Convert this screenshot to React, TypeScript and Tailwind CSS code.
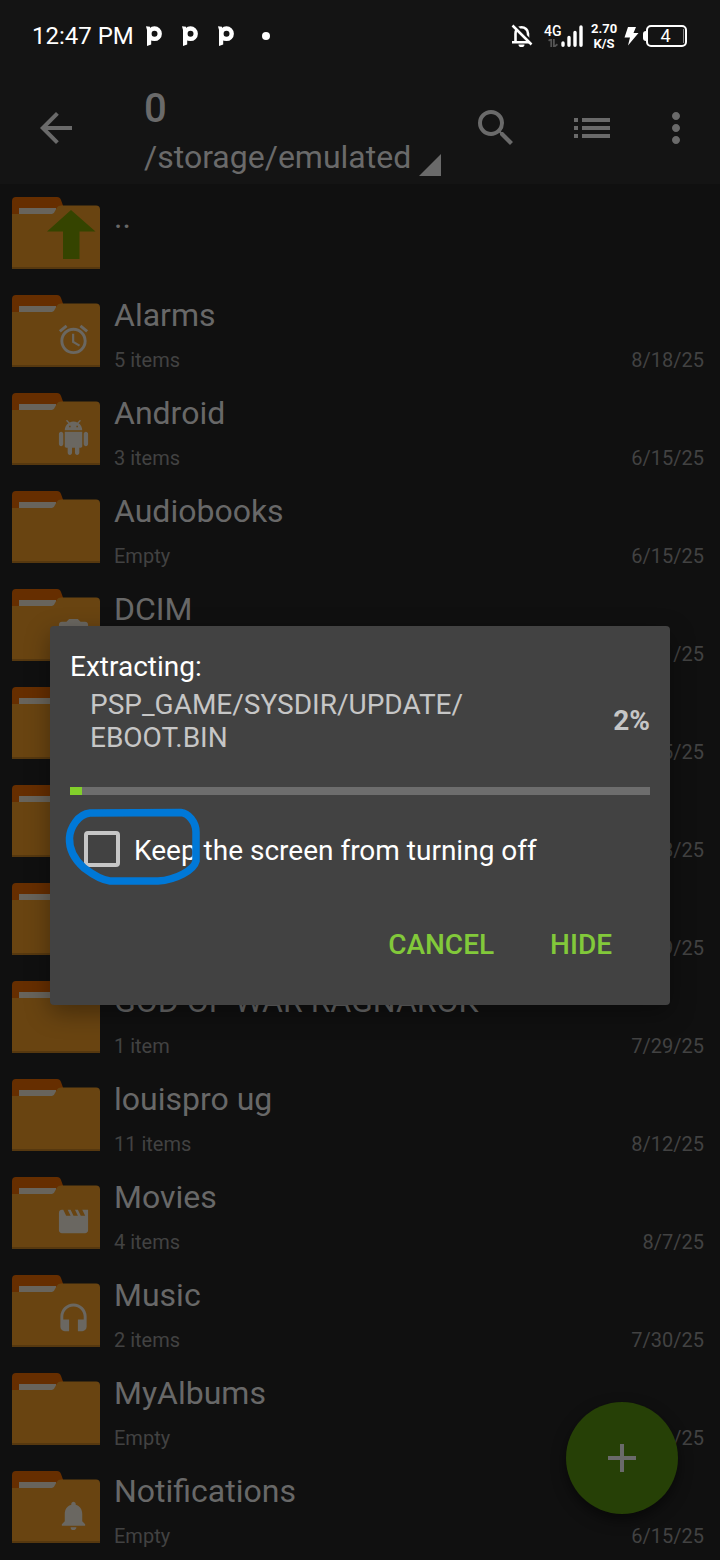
import React from "react";
import type { IconType } from "react-icons";
import {
  MdAccessAlarm,
  MdAdd,
  MdArrowBack,
  MdHeadset,
  MdMoreVert,
  MdMovie,
  MdNotifications,
  MdPhotoCamera,
  MdSearch,
} from "react-icons/md";

type Badge = IconType | ((props: { size: number; className?: string }) => React.ReactElement);

type Entry = {
  name?: string;
  detail?: string;
  date?: string;
  badge?: Badge;
  up?: boolean;
};

function AndroidRobot({ size, className }: { size: number; className?: string }) {
  return (
    <svg width={size} height={size} viewBox="0 0 24 24" fill="currentColor" className={className} aria-hidden="true">
      <path d="M6 18c0 .55.45 1 1 1h1v3.500c0 .83.67 1.500 1.500 1.500s1.500-.67 1.500-1.500V19h2v3.500c0 .83.67 1.500 1.500 1.500s1.500-.67 1.500-1.500V19h1c.55 0 1-.45 1-1V8H6v10zM3.500 8C2.670 8 2 8.670 2 9.500v7c0 .83.67 1.500 1.500 1.500S5 17.330 5 16.500v-7C5 8.670 4.330 8 3.500 8zm17 0c-.83 0-1.500.67-1.500 1.500v7c0 .83.67 1.500 1.500 1.500s1.500-.67 1.500-1.500v-7c0-.83-.67-1.500-1.500-1.500zm-4.970-5.840l1.300-1.300c.2-.2.2-.51 0-.71-.2-.2-.51-.2-.71 0l-1.480 1.480C13.850 1.230 12.950 1 12 1c-.96 0-1.860.23-2.660.63L7.850.15c-.2-.2-.51-.2-.71 0-.2.2-.2.51 0 .71l1.310 1.310C6.970 3.260 6 5.010 6 7h12c0-1.990-.97-3.750-2.470-4.840zM10 5H9V4h1v1zm5 0h-1V4h1v1z" />
    </svg>
  );
}

const entries: Entry[] = [
  { name: "..", up: true },
  { name: "Alarms", detail: "5 items", date: "8/18/25", badge: MdAccessAlarm },
  { name: "Android", detail: "3 items", date: "6/15/25", badge: AndroidRobot },
  { name: "Audiobooks", detail: "Empty", date: "6/15/25" },
  { name: "DCIM", date: "7/31/25", badge: MdPhotoCamera },
  { date: "6/15/25" },
  { date: "8/18/25" },
  { date: "7/29/25" },
  { name: "GOD OF WAR RAGNAROK", detail: "1 item", date: "7/29/25" },
  { name: "louispro ug", detail: "11 items", date: "8/12/25" },
  { name: "Movies", detail: "4 items", date: "8/7/25", badge: MdMovie },
  { name: "Music", detail: "2 items", date: "7/30/25", badge: MdHeadset },
  { name: "MyAlbums", detail: "Empty", date: "7/31/25" },
  { name: "Notifications", detail: "Empty", date: "6/15/25", badge: MdNotifications },
];

function NotificationP() {
  return (
    <svg width="16" height="20" viewBox="0 0 16 20" aria-hidden="true">
      <path d="M0 0.300L4 0.800V4H1Z" fill="#fff" />
      <path d="M1 3H5.200V18.500L1 20Z" fill="#fff" />
      <circle cx="8.500" cy="7.700" r="5.200" fill="none" stroke="#fff" strokeWidth="4.400" />
    </svg>
  );
}

function StatusBar() {
  return (
    <div className="flex h-[72px] items-center justify-between pl-8 pr-[33px] text-white">
      <div className="flex items-center">
        <span className="text-2xl">12:47 PM</span>
        <div className="ml-3 flex gap-5">
          <NotificationP />
          <NotificationP />
          <NotificationP />
        </div>
        <span className="ml-7 size-2 rounded-full bg-white" />
      </div>
      <div className="flex items-center">
        <svg width="22" height="24" viewBox="0 0 22 24" aria-label="Notifications muted">
          <path d="M4.500 17V9.500C4.500 6 7 3.200 10.500 3.200S17 6 17 9.500V17M1 18.200H18" fill="none" stroke="#fff" strokeWidth="2.600" />
          <path d="M7.500 20.500h6a3 2.600 0 0 1-6 0Z" fill="#fff" />
          <path d="M3.500 0.500L22 19" stroke="#141414" strokeWidth="2.500" />
          <path d="M1.500 1.500L20.500 20.500" stroke="#fff" strokeWidth="2.500" />
        </svg>
        <div className="ml-[11px] flex h-[22px] items-end">
          <div className="flex h-[22px] w-[18px] flex-col justify-between">
            <span className="text-sm font-medium leading-3">4G</span>
            <svg className="ml-1" width="10" height="8" viewBox="0 0 10 9" aria-hidden="true">
              <path d="M0 2L3 0V9M6 0V9L10 6" fill="none" stroke="#555" strokeWidth="2" />
            </svg>
          </div>
          <svg className="-ml-px" width="22" height="22" viewBox="0 0 22 22" aria-label="Signal strength">
            <path d="M2 18V20.200M8 12.500V20.200M14 7.500V20.200M20 2V20.200" stroke="#fff" strokeWidth="3.400" strokeLinecap="round" />
          </svg>
        </div>
        <div className="ml-2 w-[26px] text-center text-[13px] font-bold leading-[15px]">
          2.70
          <br />
          K/S
        </div>
        <svg className="ml-[7px]" width="15" height="20" viewBox="0 0 15 20" aria-label="Charging">
          <path d="M4 1H12L9.500 7H14.500L4 19.500L6 11.500H0.500Z" fill="#fff" />
        </svg>
        <div className="ml-1 flex items-center">
          <span className="h-[10px] w-[3px] rounded-l-sm bg-white" />
          <div className="flex h-[22px] w-[41px] items-center rounded-[5px] border-2 border-white">
            <span className="flex-1 text-center text-lg leading-4">4</span>
            <span className="mr-px h-[14px] w-px bg-[#888]" />
          </div>
        </div>
      </div>
    </div>
  );
}

function Toolbar() {
  return (
    <div className="flex h-28 items-start pl-8 pr-2 text-[#6a6a6a]">
      <button aria-label="Back" className="flex h-28 w-12 items-center justify-center">
        <MdArrowBack size={48} />
      </button>
      <button className="ml-16 flex-1 pt-[13px] text-left">
        <span className="block text-[40px] font-medium leading-[48px]">0</span>
        <span className="flex items-center text-[32px] leading-[48px]">
          /storage/emulated
          <svg className="ml-2 mt-[15px]" width="22" height="22" viewBox="0 0 22 22" aria-hidden="true">
            <path d="M22 0V22H0Z" fill="currentColor" />
          </svg>
        </span>
      </button>
      <button aria-label="Search" className="flex h-28 w-24 items-center justify-center">
        <MdSearch size={48} />
      </button>
      <button aria-label="List view" className="flex h-28 w-24 items-center justify-center">
        <svg width="36" height="20" viewBox="0 0 36 20" fill="currentColor" aria-hidden="true">
          <path d="M0 0h4v4H0zM8 0h28v4H8zM0 8h4v4H0zM8 8h28v4H8zM0 16h4v4H0zM8 16h28v4H8z" />
        </svg>
      </button>
      <button aria-label="More options" className="flex h-28 w-[72px] items-center justify-center">
        <MdMoreVert size={48} />
      </button>
    </div>
  );
}

function Folder({ badge: Badge, up }: { badge?: Badge; up?: boolean }) {
  return (
    <div className="relative h-[72px] w-[88px] shrink-0">
      <svg width="88" height="72" viewBox="0 0 88 72" aria-hidden="true">
        <path d="M0 20V4Q0 0 4 0H45Q48 0 49 3L53 14V24H0Z" fill="#662e00" />
        <path d="M7 11H44V22H7Z" fill="#68645c" />
        <path d="M0 17H40Q42 17 43 14L45 10.500Q46 8.500 49 8.500H84Q88 8.500 88 12.500V72H0Z" fill="#694411" />
        <path d="M0 70H88V72H0Z" fill="#56380f" />
        {up && <path d="M59 13L83.500 34.500H67.500V62H51V34.500H35Z" fill="#354400" />}
      </svg>
      {Badge && <Badge size={35} className="absolute left-[44px] top-[27px] text-[#6a6761]" />}
    </div>
  );
}

function FileRow({ entry }: { entry: Entry }) {
  return (
    <li className="flex h-[98px] gap-[14px] pl-3 pr-4 pt-[13px]">
      <Folder badge={entry.badge} up={entry.up} />
      <div className="min-w-0 flex-1">
        <div className="h-10 truncate text-[32px] leading-10 text-[#686868]">{entry.name}</div>
        <div className="mt-[13px] flex justify-between text-xl leading-6 text-[#424242]">
          <span>{entry.detail}</span>
          <span>{entry.date}</span>
        </div>
      </div>
    </li>
  );
}

function ExtractDialog() {
  const percent = 2;
  return (
    <div
      role="dialog"
      aria-labelledby="extract-title"
      className="w-full rounded bg-[#424242] px-5 py-6 text-[28px] leading-[33px] text-white shadow-[0_8px_24px_rgba(0,0,0,0.35)]"
    >
      <h2 id="extract-title">Extracting:</h2>
      <div className="mt-[5px] flex items-center justify-between pl-5 text-[#c6c6c6]">
        <p>
          PSP_GAME/SYSDIR/UPDATE/
          <br />
          EBOOT.BIN
        </p>
        <span className="font-bold">{percent}%</span>
      </div>
      <div
        role="progressbar"
        aria-label="Extraction progress"
        aria-valuenow={percent}
        className="mt-[33px] h-2 bg-[#6d6d6d]"
      >
        <div className="h-2 bg-[#82cf2b]" style={{ width: `${percent}%` }} />
      </div>
      <div className="relative mt-[6px] flex h-24 items-center pl-[14px]">
        <input
          id="keep-on"
          type="checkbox"
          className="size-9 appearance-none rounded border-4 border-[#c6c6c6] checked:bg-[#82cf2b]"
        />
        <label htmlFor="keep-on" className="pl-[14px] pt-1">
          Keep the screen from turning off
        </label>
        <svg
          className="pointer-events-none absolute -left-2 top-[2px]"
          width="144"
          height="88"
          viewBox="62 803 144 88"
          aria-hidden="true"
        >
          <path
            d="M90 813L181 812.500C188 813 196 822 196 832V861C194 870 176 880 158 881H110C101 880 92 874 84 868C75 860 69 849 69.500 838C70 828 78 814 90 813Z"
            fill="none"
            stroke="#0078d7"
            strokeWidth="7.500"
            strokeLinejoin="round"
          />
        </svg>
      </div>
      <div className="mt-3 flex justify-end gap-6 pr-[22px] font-medium text-[#82c93a]">
        <button className="h-[72px] px-4">CANCEL</button>
        <button className="h-[72px] px-4">HIDE</button>
      </div>
    </div>
  );
}

export default function App() {
  return (
    <div className="relative min-h-screen bg-[#101010] font-['Roboto',sans-serif]">
      <header className="bg-[#141414]">
        <StatusBar />
        <Toolbar />
      </header>
      <ul>
        {entries.map((entry, i) => (
          <FileRow key={i} entry={entry} />
        ))}
      </ul>
      <button
        aria-label="Add"
        className="absolute bottom-[46px] right-[42px] flex size-28 items-center justify-center rounded-full bg-[#264006] text-[#6a6a6a] shadow-[0_6px_14px_rgba(0,0,0,0.5)]"
      >
        <MdAdd size={48} />
      </button>
      <div className="absolute inset-0 flex items-center px-[50px] pt-[70px]">
        <ExtractDialog />
      </div>
    </div>
  );
}
